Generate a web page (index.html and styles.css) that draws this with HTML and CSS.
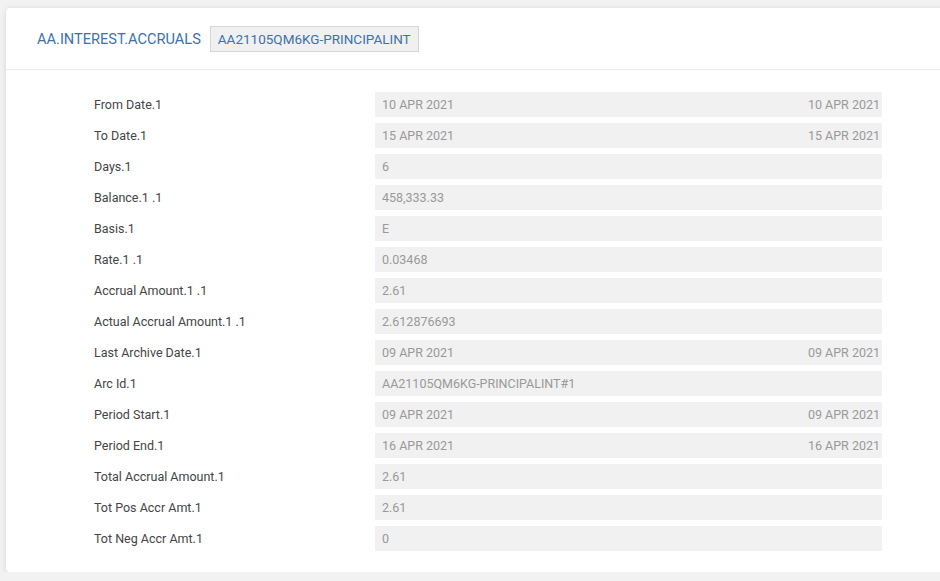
FILE: index.html
```html
<!DOCTYPE html>
<html lang="en">
<head>
    <meta charset="UTF-8">
    <title>AA.INTEREST.ACCRUALS</title>
    <link rel="stylesheet" href="styles.css">
</head>
<body>

    <div class="card">
        <div class="card-head">
            <span class="title">AA.INTEREST.ACCRUALS</span>
            <span class="record-id">AA21105QM6KG-PRINCIPALINT</span>
        </div>
        <div class="fields">
            <div class="label">From Date.1</div>
            <div class="value"><span>10 APR 2021</span><span>10 APR 2021</span></div>

            <div class="label">To Date.1</div>
            <div class="value"><span>15 APR 2021</span><span>15 APR 2021</span></div>

            <div class="label">Days.1</div>
            <div class="value"><span>6</span></div>

            <div class="label">Balance.1 .1</div>
            <div class="value"><span>458,333.33</span></div>

            <div class="label">Basis.1</div>
            <div class="value"><span>E</span></div>

            <div class="label">Rate.1 .1</div>
            <div class="value"><span>0.03468</span></div>

            <div class="label">Accrual Amount.1 .1</div>
            <div class="value"><span>2.61</span></div>

            <div class="label">Actual Accrual Amount.1 .1</div>
            <div class="value"><span>2.612876693</span></div>

            <div class="label">Last Archive Date.1</div>
            <div class="value"><span>09 APR 2021</span><span>09 APR 2021</span></div>

            <div class="label">Arc Id.1</div>
            <div class="value"><span>AA21105QM6KG-PRINCIPALINT#1</span></div>

            <div class="label">Period Start.1</div>
            <div class="value"><span>09 APR 2021</span><span>09 APR 2021</span></div>

            <div class="label">Period End.1</div>
            <div class="value"><span>16 APR 2021</span><span>16 APR 2021</span></div>

            <div class="label">Total Accrual Amount.1</div>
            <div class="value"><span>2.61</span></div>

            <div class="label">Tot Pos Accr Amt.1</div>
            <div class="value"><span>2.61</span></div>

            <div class="label">Tot Neg Accr Amt.1</div>
            <div class="value"><span>0</span></div>
        </div>
    </div>

</body>
</html>
```

FILE: styles.css
```css
body {
    margin: 0;
    background-color: #f2f2f2;
    font-family: Roboto, 'Liberation Sans', sans-serif;
    overflow: hidden;
}

/* Card */
.card {
    margin: 8px 0 0 6px;
    width: 960px;
    background: #fff;
    border-radius: 4px;
    box-shadow: 0px 1px 6px rgba(0, 0, 0, 0.12);
    padding-bottom: 21px;
}

.card-head {
    height: 61px;
    display: flex;
    align-items: center;
    padding-left: 31px;
    border-bottom: 1px solid #ececec;
}

.title {
    font-size: 14.6px;
    color: #3a72b0;
}

.record-id {
    margin-left: 9px;
    padding: 0 7px;
    height: 24px;
    line-height: 24px;
    font-size: 13.5px;
    color: #3a72b0;
    background-color: #f0f0f0;
    border: 1px solid #d6d6d6;
}

/* Field rows */
.fields {
    display: grid;
    grid-template-columns: 281px 507px;
    row-gap: 6px;
    padding: 22px 0 0 88px;
}

.label {
    font-size: 12.5px;
    color: #444;
    line-height: 25px;
}

.value {
    height: 25px;
    line-height: 25px;
    background-color: #f1f1f1;
    font-size: 12.5px;
    color: #999;
    display: flex;
    justify-content: space-between;
    padding: 0 2px 0 7px;
}
```
